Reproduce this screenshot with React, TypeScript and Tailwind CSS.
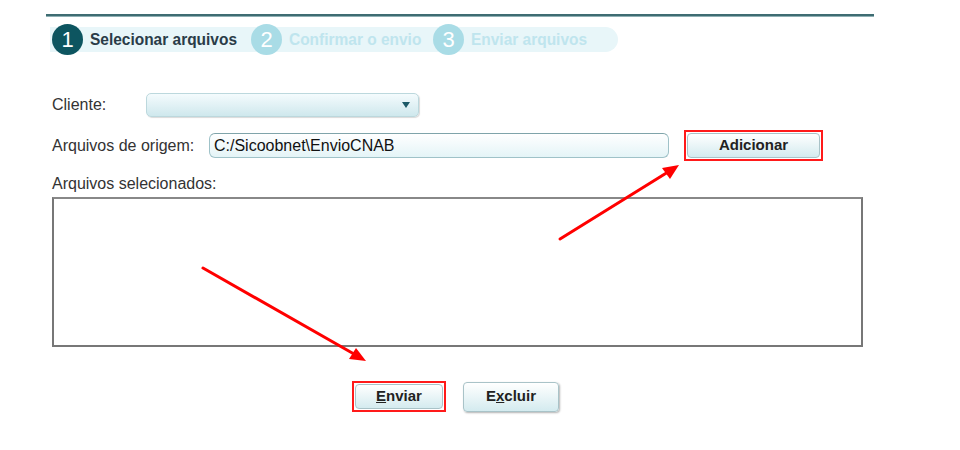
import React from "react";

function Step({ n, label, active, w }: { n: string; label: string; active?: boolean; w: string }) {
  return (
    <div className="flex items-center gap-[7px]">
      <div
        className={
          "w-[31px] h-[31px] rounded-full flex items-center justify-center text-white text-[22px] " +
          (active ? "bg-[#0d5560]" : "bg-[#a9dce6]")
        }
      >
        {n}
      </div>
      <div className={w + " overflow-visible"}>
        <span
          className={
            "inline-block whitespace-nowrap origin-left scale-x-[0.91] text-[17px] font-bold " +
            (active ? "text-[#2a3c48]" : "text-[#bfe5ee]")
          }
        >
          {label}
        </span>
      </div>
    </div>
  );
}

function Btn({ children, className = "" }: { children: React.ReactNode; className?: string }) {
  return (
    <div
      className={
        "rounded-[4px] border border-[#a9c3c8] bg-gradient-to-b from-[#ffffff] to-[#d4ebef] flex items-center justify-center text-[15px] font-bold text-[#222] " +
        className
      }
    >
      {children}
    </div>
  );
}

export default function App() {
  return (
    <div
      className="relative w-[960px] h-[450px] bg-white overflow-hidden"
      style={{ fontFamily: "'Liberation Sans', Arial, sans-serif" }}
    >
      <div className="pt-[14px] pl-[46px]">
        <div className="w-[828px] h-[3px] bg-[#3e6c72] border-b border-[#8fb0b4]" />
        <div className="mt-[7px] relative h-[31px] w-[572px]">
          <div className="absolute left-[4px] right-0 top-[3px] h-[25px] bg-[#e8f6f9] rounded-r-full" />
          <div className="relative flex items-center pl-[6px]">
            <Step n="1" label="Selecionar arquivos" active w="w-[148px]" />
            <div className="w-[13px]" />
            <Step n="2" label="Confirmar o envio" w="w-[132px]" />
            <div className="w-[12px]" />
            <Step n="3" label="Enviar arquivos" w="w-[114px]" />
          </div>
        </div>

        <div className="pl-[6px] text-[16px] text-[#333]">
          <div className="mt-[38px] flex items-center h-[24px]">
            <span className="w-[94px]">Cliente:</span>
            <div className="w-[273px] h-[24px] rounded-[5px] border border-[#bcd8dd] bg-gradient-to-b from-[#f4fbfd] to-[#cfe8ed] shadow-[1px_1px_1px_rgba(0,0,0,0.15)] flex items-center justify-end pr-[8px]">
              <svg width="8" height="6" viewBox="0 0 8 6">
                <path d="M0 0 L8 0 L4 6 Z" fill="#1d5a68" />
              </svg>
            </div>
          </div>

          <div className="mt-[13px] flex items-center">
            <span className="w-[157px] whitespace-nowrap">Arquivos de origem:</span>
            <div className="w-[460px] h-[25px] rounded-[6px] border border-[#9fc2c8] border-t-[#7fa4aa] bg-gradient-to-b from-[#ffffff] to-[#e4f4f7] flex items-center pl-[4px] text-[16px] text-[#111]">
              C:/Sicoobnet\EnvioCNAB
            </div>
            <div className="ml-[15px] border-2 border-[#ff1a1a] p-[1px] w-[139px] h-[31px]">
              <Btn className="w-full h-full">Adicionar</Btn>
            </div>
          </div>

          <div className="mt-[13px] leading-[20px]">Arquivos selecionados:</div>
          <div className="mt-[3px] w-[811px] h-[150px] border-2 border-[#777] border-t-[#888]" />
        </div>

        <div className="mt-[34px] flex items-center pl-[306px]">
          <div className="border-2 border-[#ff1a1a] p-[1px] w-[94px] h-[31px]">
            <Btn className="w-full h-full">
              <span className="underline">E</span>nviar
            </Btn>
          </div>
          <Btn className="ml-[17px] w-[96px] h-[30px] shadow-[1px_1px_2px_rgba(0,0,0,0.3)]">
            E<span className="underline">x</span>cluir
          </Btn>
        </div>
      </div>

      <svg className="absolute inset-0 pointer-events-none" width="960" height="450">
        <line x1="560" y1="239" x2="668" y2="172" stroke="#ff0000" strokeWidth="3" strokeLinecap="round" />
        <path d="M679 165 L662 168 L670 179 Z" fill="#ff0000" />
        <line x1="203" y1="268" x2="354" y2="354" stroke="#ff0000" strokeWidth="3" strokeLinecap="round" />
        <path d="M366 361 L349 359 L356 348 Z" fill="#ff0000" />
      </svg>
    </div>
  );
}
